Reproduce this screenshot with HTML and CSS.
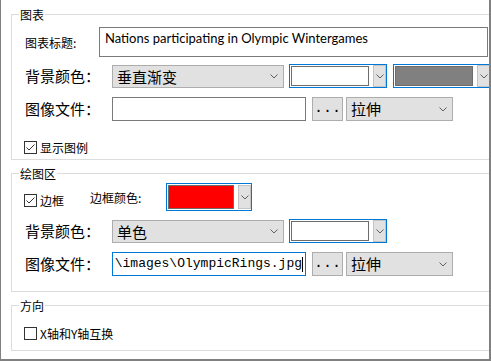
FILE: index.html
```html
<!DOCTYPE html>
<html lang="zh-CN">
<head>
  <meta charset="UTF-8">
  <title>图表属性</title>
  <link rel="stylesheet" href="styles.css">
</head>
<body>
  <div class="panel">
    <fieldset class="group group-chart">
      <legend>图表</legend>
      <div class="row row-title">
        <span class="label small title-label">图表标题:</span>
        <div class="textbox title-box">Nations participating in Olympic Wintergames</div>
      </div>
      <div class="row row-control">
        <span class="label">背景颜色：</span>
        <div class="combo combo-fill">
          <span>垂直渐变</span>
          <svg class="chevron" width="8" height="5" viewBox="0 0 8 5"><path d="M0.5 0.5 L4 4 L7.5 0.5"/></svg>
        </div>
        <div class="colorpick focused">
          <span class="swatch white"></span>
          <span class="dropbtn"><svg class="chevron" width="8" height="5" viewBox="0 0 8 5"><path d="M0.5 0.5 L4 4 L7.5 0.5"/></svg></span>
        </div>
        <div class="colorpick focused second">
          <span class="swatch gray"></span>
          <span class="dropbtn"><svg class="chevron" width="8" height="5" viewBox="0 0 8 5"><path d="M0.5 0.5 L4 4 L7.5 0.5"/></svg></span>
        </div>
      </div>
      <div class="row row-control row-image">
        <span class="label">图像文件：</span>
        <div class="textbox file-box"></div>
        <div class="button browse">...</div>
        <div class="combo combo-mode">
          <span>拉伸</span>
          <svg class="chevron" width="8" height="5" viewBox="0 0 8 5"><path d="M0.5 0.5 L4 4 L7.5 0.5"/></svg>
        </div>
      </div>
      <div class="check check-legend">
        <span class="box"><svg width="11" height="11" viewBox="0 0 11 11"><path d="M1.5 5.5 L4 8 L9.5 2.5"/></svg></span>
        <span>显示图例</span>
      </div>
    </fieldset>

    <fieldset class="group group-plot">
      <legend>绘图区</legend>
      <div class="row row-border">
        <div class="check check-border">
          <span class="box"><svg width="11" height="11" viewBox="0 0 11 11"><path d="M1.5 5.5 L4 8 L9.5 2.5"/></svg></span>
          <span>边框</span>
        </div>
        <span class="label small border-label">边框颜色:</span>
        <div class="colorpick focused small-pick">
          <span class="swatch red"></span>
          <span class="dropbtn"><svg class="chevron" width="8" height="5" viewBox="0 0 8 5"><path d="M0.5 0.5 L4 4 L7.5 0.5"/></svg></span>
        </div>
      </div>
      <div class="row row-control row-bg2">
        <span class="label">背景颜色：</span>
        <div class="combo combo-fill">
          <span>单色</span>
          <svg class="chevron" width="8" height="5" viewBox="0 0 8 5"><path d="M0.5 0.5 L4 4 L7.5 0.5"/></svg>
        </div>
        <div class="colorpick focused">
          <span class="swatch white"></span>
          <span class="dropbtn"><svg class="chevron" width="8" height="5" viewBox="0 0 8 5"><path d="M0.5 0.5 L4 4 L7.5 0.5"/></svg></span>
        </div>
      </div>
      <div class="row row-control row-image">
        <span class="label">图像文件：</span>
        <div class="textbox file-box path-box">
          <span class="path">\images\OlympicRings.jpg</span><span class="caret"></span>
        </div>
        <div class="button browse">...</div>
        <div class="combo combo-mode">
          <span>拉伸</span>
          <svg class="chevron" width="8" height="5" viewBox="0 0 8 5"><path d="M0.5 0.5 L4 4 L7.5 0.5"/></svg>
        </div>
      </div>
    </fieldset>

    <fieldset class="group group-dir">
      <legend>方向</legend>
      <div class="check check-swap">
        <span class="box"></span>
        <span>X轴和Y轴互换</span>
      </div>
    </fieldset>
  </div>
</body>
</html>
```

FILE: styles.css
```css
* {
  box-sizing: border-box;
}
body {
  margin: 0;
  background: #fff;
  color: #000;
  font-family: "Noto Sans CJK SC", sans-serif;
}

/* outer frame - clipped on the right */
.panel {
  width: 491px;
  height: 361px;
  border-left: 1px solid #808080;
  border-right: 2px solid #808080;
  border-bottom: 2px solid #808080;
  overflow: hidden;
  padding: 7px 0 0 10px;
}

/* group boxes */
.group {
  width: 500px;
  margin: 0;
  padding: 0 0 0 7px;
  border: 1px solid #dcdcdc;
  min-width: 0;
}
.group legend {
  padding: 0 1px;
  font-size: 12px;
  line-height: 15px;
}
.group-chart {
  height: 153px;
}
.group-plot {
  height: 126px;
  margin-top: 6px;
}
.group-dir {
  height: 53px;
  margin-top: 6px;
}

/* rows */
.row {
  display: flex;
  align-items: center;
  padding-left: 6px;
}
.row-title {
  margin-top: 5px;
  align-items: center;
}
.row-control {
  height: 24px;
  margin-top: 7px;
}
.row-image {
  margin-top: 9px;
}
.row-border {
  height: 28px;
  margin-top: 2px;
  padding-left: 5px;
}
.row-bg2 {
  margin-top: 8px;
}

.label {
  width: 87px;
  flex: none;
  font-size: 15px;
  line-height: 20px;
}
.label.small {
  font-size: 12px;
  line-height: 15px;
}
.title-label {
  width: 74px;
}
.border-label {
  width: 76px;
  margin-left: 26px;
}

/* text boxes */
.textbox {
  border: 1px solid #7a7a7a;
  background: #fff;
  flex: none;
}
.title-box {
  width: 389px;
  height: 30px;
  padding: 2px 0 0 5px;
  font-family: Lato, "Noto Sans", sans-serif;
  font-size: 13px;
  line-height: 16px;
  white-space: nowrap;
}
.file-box {
  width: 194px;
  height: 24px;
}
.path-box {
  border-color: #0078d7;
  display: flex;
  justify-content: flex-end;
  align-items: center;
  overflow: hidden;
  padding-right: 2px;
}
.path {
  flex: none;
  white-space: nowrap;
  font-family: "Liberation Mono", monospace;
  font-size: 13px;
  line-height: 16px;
}
.caret {
  flex: none;
  width: 1px;
  height: 15px;
  background: #000;
}

/* combo boxes and buttons */
.combo {
  display: flex;
  align-items: center;
  justify-content: space-between;
  height: 23px;
  padding: 0 5px 0 4px;
  background: #e1e1e1;
  border: 1px solid #adadad;
  font-size: 15px;
  line-height: 20px;
  flex: none;
}
.row-control .combo-fill {
  align-self: flex-end;
}
.combo-fill {
  width: 172px;
}
.combo-mode {
  width: 107px;
  height: 24px;
  margin-left: 3px;
}
.chevron {
  display: block;
  fill: none;
  stroke: #606060;
  stroke-width: 1;
}
.button {
  background: #e1e1e1;
  border: 1px solid #adadad;
  flex: none;
}
.browse {
  width: 31px;
  height: 24px;
  margin-left: 6px;
  text-align: center;
  font-family: "Liberation Mono", monospace;
  font-size: 15px;
  line-height: 21px;
}

/* colour pickers */
.colorpick {
  display: flex;
  align-items: center;
  width: 98px;
  height: 24px;
  margin-left: 5px;
  border: 1px solid #adadad;
  flex: none;
}
.colorpick.focused {
  border-color: #0078d7;
}
.colorpick.second {
  margin-left: 6px;
}
.swatch {
  width: 78px;
  height: 20px;
  margin-left: 1px;
  border: 1px solid #6d6d6d;
}
.swatch.white {
  background: #fff;
}
.swatch.gray {
  background: #808080;
}
.swatch.red {
  background: #ff0000;
}
.dropbtn {
  display: flex;
  align-items: center;
  justify-content: center;
  width: 13px;
  height: 22px;
  margin-left: auto;
  background: #e1e1e1;
  border: 1px solid #c4c4c4;
}
.small-pick {
  width: 86px;
  height: 28px;
  margin-left: 0;
}
.small-pick .swatch {
  width: 66px;
  height: 24px;
}
.small-pick .dropbtn {
  height: 24px;
  margin-right: 0;
}

/* checkboxes */
.check {
  display: flex;
  align-items: center;
  gap: 3px;
  font-size: 12px;
  line-height: 13px;
}
.check .box {
  width: 13px;
  height: 13px;
  border: 1px solid #333;
  background: #fff;
}
.check .box svg {
  display: block;
  fill: none;
  stroke: #333;
  stroke-width: 1;
}
.check-legend {
  margin: 20px 0 0 5px;
}
.check-border {
  margin-top: 6px;
}
.check-swap {
  margin: 14px 0 0 5px;
}
```
